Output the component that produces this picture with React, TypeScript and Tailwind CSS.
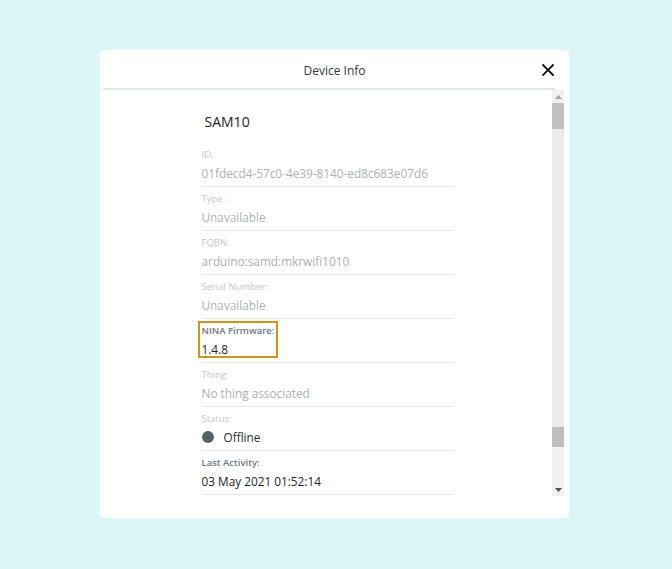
import React from 'react';

type Field = {
  label: string;
  value: string;
  strong?: boolean;
  highlight?: boolean;
  status?: boolean;
};

const FIELDS: Field[] = [
  { label: 'ID:', value: '01fdecd4-57c0-4e39-8140-ed8c683e07d6' },
  { label: 'Type:', value: 'Unavailable' },
  { label: 'FQBN:', value: 'arduino:samd:mkrwifi1010' },
  { label: 'Serial Number:', value: 'Unavailable' },
  { label: 'NINA Firmware:', value: '1.4.8', strong: true, highlight: true },
  { label: 'Thing:', value: 'No thing associated' },
  { label: 'Status:', value: 'Offline', status: true },
  { label: 'Last Activity:', value: '03 May 2021 01:52:14', strong: true },
];

function InfoRow({ field }: { field: Field }) {
  const { label, value, strong, highlight, status } = field;
  return (
    <div className="relative border-b border-[#e3e8e8] pt-[5px] pb-[3px]">
      {highlight && (
        <div className="absolute left-[-4px] top-[2px] w-[80px] h-[37px] border-2 border-[#d49513]" />
      )}
      <div
        className={
          strong
            ? 'text-[9.5px] leading-[14px] font-semibold text-[#6c787d]'
            : 'text-[9.5px] leading-[14px] text-[#c3c7c9]'
        }
      >
        {label}
      </div>
      {status ? (
        <div className="mt-[1px] flex items-center gap-[10px] h-[20px]">
          <span className="w-[12px] h-[12px] rounded-full bg-[#566065]" />
          <span className="text-[11.8px] leading-[20px] text-[#2a2f33]">{value}</span>
        </div>
      ) : (
        <div
          className={
            strong
              ? 'mt-[1px] text-[11.8px] leading-[20px] text-[#1f2427]'
              : 'mt-[1px] text-[11.8px] leading-[20px] text-[#adb1b3]'
          }
        >
          {value}
        </div>
      )}
    </div>
  );
}

function Scrollbar() {
  return (
    <div className="w-[12px] flex flex-col bg-[#f1f1f1] mr-[5px]">
      <div className="h-[13px] flex items-center justify-center">
        <svg width="7" height="4" viewBox="0 0 7 4">
          <path d="M0 4 L3.5 0 L7 4 Z" fill="#a3a3a3" />
        </svg>
      </div>
      <div className="h-[26px] bg-[#c1c1c1]" />
      <div className="h-[298px] bg-[#ebebeb]" />
      <div className="h-[20px] bg-[#bebebe]" />
      <div className="flex-1 bg-[#f1f1f1]" />
      <div className="h-[13px] flex items-center justify-center">
        <svg width="7" height="4" viewBox="0 0 7 4">
          <path d="M0 0 L7 0 L3.5 4 Z" fill="#505050" />
        </svg>
      </div>
    </div>
  );
}

export default function App() {
  return (
    <div
      className="w-[672px] h-[569px] bg-[#dcf5f6] pt-[50px] pl-[100px]"
      style={{ fontFamily: '"Open Sans", "Noto Sans", sans-serif' }}
    >
      <div className="w-[469px] h-[468px] bg-white rounded-[4px] flex flex-col">
        {/* Header */}
        <div className="h-[38px] relative flex items-center justify-center">
          <span className="text-[12px] text-[#333a3d] mt-[4px]">Device Info</span>
          <button className="absolute right-[15px] top-[14px] w-[12px] h-[12px] flex items-center justify-center">
            <svg width="12" height="12" viewBox="0 0 12 12">
              <path d="M1 1 L11 11 M11 1 L1 11" stroke="#111" strokeWidth="1.8" strokeLinecap="square" />
            </svg>
          </button>
        </div>
        <div className="mx-[3px] mr-[14px] h-[2px] bg-[#e0e5e5]" />

        {/* Body */}
        <div className="flex h-[406px] pl-[3px]">
          <div className="flex-1 flex justify-center">
            <div className="w-[252px] pt-[20px]">
              <div className="text-[14px] leading-[24px] text-[#1e2326] pl-[3px]">SAM10</div>
              <div className="mt-[9px]">
                {FIELDS.map((f) => (
                  <InfoRow key={f.label} field={f} />
                ))}
              </div>
            </div>
          </div>
          <Scrollbar />
        </div>
      </div>
    </div>
  );
}
